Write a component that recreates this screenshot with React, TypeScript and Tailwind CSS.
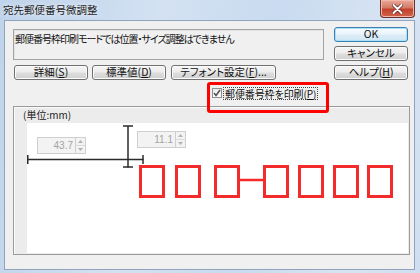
import React from "react";

const JP = "font-['Noto_Sans_CJK_JP','Noto_Sans',sans-serif] [font-feature-settings:'palt']";

type BP = { children: React.ReactNode; className?: string; def?: boolean };

function Btn({ children, className = "", def = false }: BP) {
  return (
    <div
      className={
        "flex h-[15px] items-center justify-center rounded-[3px] border text-[10.5px] leading-none text-[#111] " +
        (def
          ? "border-[#3c7fb1] bg-[linear-gradient(to_bottom,#f6fbfe,#eaf4fb_48%,#dcecf7_52%,#d0e6f5)] shadow-[inset_0_0_0_1px_#a9e1fa] "
          : "border-[#707070] bg-[linear-gradient(to_bottom,#f5f5f5,#ececec_48%,#dedede_52%,#d0d0d0)] shadow-[inset_0_0_0_1px_#fbfbfb] ") +
        className
      }
    >
      {children}
    </div>
  );
}

function Spin({ value, className }: { value: string; className: string }) {
  return (
    <div className={"absolute flex h-[17px] " + className}>
      <div className="flex w-[39px] items-center justify-end border border-[#cfcfcf] bg-[#f3f3f3] pr-[2px] font-['Liberation_Sans',sans-serif] text-[10px] leading-none text-[#a3a3a3]">
        {value}
      </div>
      <div className="flex w-[10px] flex-col border border-l-0 border-[#cfcfcf] bg-[#f3f3f3]">
        <div className="flex flex-1 items-center justify-center border-b border-[#dadada]">
          <svg width="5" height="3" viewBox="0 0 5 3">
            <path d="M0 3 L2.5 0 L5 3Z" fill="#b3b3b3" />
          </svg>
        </div>
        <div className="flex flex-1 items-center justify-center">
          <svg width="5" height="3" viewBox="0 0 5 3">
            <path d="M0 0 L2.5 3 L5 0Z" fill="#b3b3b3" />
          </svg>
        </div>
      </div>
    </div>
  );
}

const boxes = [112, 148, 187, 236, 271, 306, 340];

export default function App() {
  return (
    <div
      className={
        "relative flex h-[273px] w-[420px] flex-col overflow-hidden bg-[linear-gradient(100deg,#bfd3eb_0%,#d3e1f2_35%,#c9dbf0_60%,#d8e4f3_85%,#cfdff1_100%)] " +
        JP
      }
    >
      {/* title bar */}
      <div className="flex h-[20px] shrink-0 items-start justify-between pl-[3px] pr-[5px]">
        <div className="mt-[3px] text-[10.5px] leading-[13px] text-[#1c1c1c] [text-shadow:0_0_4px_#ffffff]">
          宛先郵便番号微調整
        </div>
        <div className="flex h-[18px] w-[35px] items-center justify-center rounded-b-[4px] border border-t-0 border-[#6e2f2b] bg-[linear-gradient(to_bottom,#e9a99a,#d67a66_45%,#c2412c_55%,#d2644c)] shadow-[inset_0_0_0_1px_#f0b8aa]">
          <svg width="11" height="10" viewBox="0 0 11 10">
            <path d="M1.5 1 L9.5 9 M9.5 1 L1.5 9" stroke="#5a2420" strokeWidth="3.4" strokeLinecap="round" />
            <path d="M1.5 1 L9.5 9 M9.5 1 L1.5 9" stroke="#ffffff" strokeWidth="2" strokeLinecap="round" />
          </svg>
        </div>
      </div>

      {/* client area */}
      <div className="mb-[3px] ml-[4px] mr-[5px] flex flex-1 flex-col border border-[#8fa3bb] bg-[#f0f0f0]">
        <div className="flex">
          {/* left column */}
          <div className="ml-[8px] mt-[8px] flex w-[311px] flex-col">
            <div className="h-[31px] border border-[#a3a3a3] bg-[#f0f0f0] pl-[1px] pt-[2px] text-[10px] leading-[13px] tracking-[-1px] text-[#111] shadow-[inset_1px_1px_0_#e3e3e3]">
              郵便番号枠印刷モードでは位置・サイズ調整はできません
            </div>
            <div className="ml-[1px] mt-[5px] flex gap-[4px]">
              <Btn className="w-[74px]">
                詳細(<span className="underline">S</span>)
              </Btn>
              <Btn className="w-[74px]">
                標準値(<span className="underline">D</span>)
              </Btn>
              <Btn className="ml-[1px] w-[105px]">
                テフォント設定(<span className="underline">F</span>)...
              </Btn>
            </div>
          </div>
          {/* right column */}
          <div className="ml-[10px] mt-[6px] flex w-[74px] flex-col gap-[4px]">
            <Btn def>OK</Btn>
            <Btn>キャンセル</Btn>
            <Btn>
              ヘルプ(<span className="underline">H</span>)
            </Btn>
          </div>
        </div>

        {/* checkbox row */}
        <div className="flex h-[26px] items-center pl-[207px]">
          <div className="flex h-[10px] w-[10px] items-center justify-center border border-[#8e8f8f] bg-[linear-gradient(to_bottom,#ececec,#fdfdfd)]">
            <svg width="8" height="8" viewBox="0 0 8 8">
              <path d="M1 4 L3 6.5 L7 1" fill="none" stroke="#4d4d4d" strokeWidth="1.4" />
            </svg>
          </div>
          <div className="ml-[1px] border border-dotted border-[#444] px-[1px] text-[10px] leading-[11px] tracking-[-0.1px] text-[#111]">
            郵便番号枠を印刷(<span className="underline">P</span>)
          </div>
        </div>

        {/* panel */}
        <div className="ml-[8px] flex h-[149px] w-[397px] flex-col border border-[#9b9b9b] bg-[#ececec] shadow-[inset_1px_1px_0_#fafafa]">
          <div className="flex h-[16px] shrink-0 items-center pl-[9px] text-[10px] leading-none text-[#222]">
            (単位:mm)
          </div>
          <div className="relative mb-[1px] ml-[13px] mr-[1px] flex-1 bg-white">
            <svg className="absolute left-0 top-0" width="382" height="130">
              <g stroke="#2b2b2b" strokeWidth="1.5" fill="none">
                <line x1="0" y1="36.5" x2="116.5" y2="36.5" />
                <line x1="0.75" y1="32" x2="0.75" y2="41" />
                <line x1="116" y1="32" x2="116" y2="41" />
                <line x1="101" y1="3" x2="101" y2="44.5" />
                <line x1="96" y1="3" x2="106" y2="3" />
                <line x1="96" y1="44" x2="106" y2="44" />
              </g>
              <g stroke="#f32b2b" strokeWidth="3" fill="none">
                {boxes.map((x) => (
                  <rect key={x} x={x + 1.5} y={43.5} width={23} height={30} />
                ))}
              </g>
              <line x1="213" y1="57" x2="236" y2="57" stroke="#f32b2b" strokeWidth="2.5" />
            </svg>
            <Spin value="43.7" className="left-[10px] top-[14px]" />
            <Spin value="11.1" className="left-[110px] top-[8px]" />
          </div>
        </div>
      </div>

      {/* red annotation */}
      <div className="absolute left-[207px] top-[82px] h-[31px] w-[122px] rounded-[3px] border-[3px] border-[#ff0000]" />
    </div>
  );
}
